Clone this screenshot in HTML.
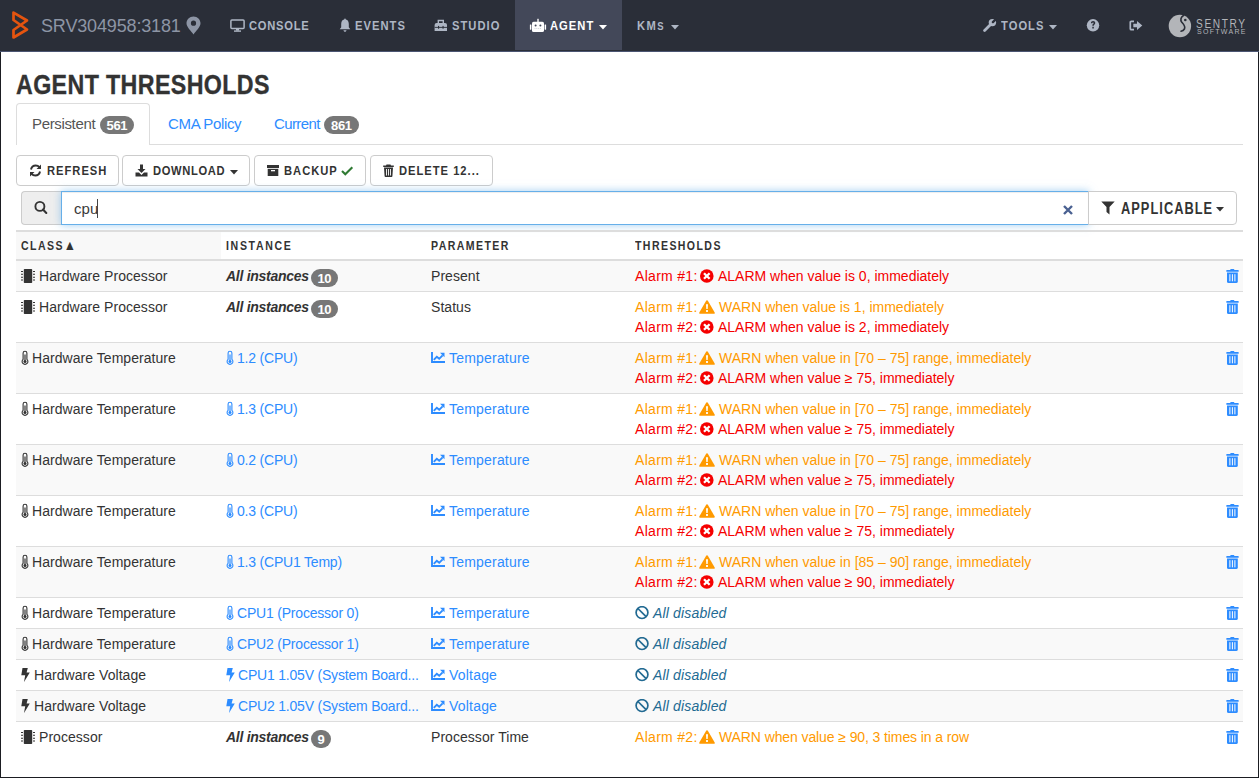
<!DOCTYPE html>
<html><head><meta charset="utf-8">
<style>
*{box-sizing:border-box;margin:0;padding:0}
html,body{width:1259px;height:778px;overflow:hidden;background:#fff}
body{position:relative;font-family:"Liberation Sans",sans-serif;color:#333;font-size:14px}
.a{position:absolute;white-space:nowrap;line-height:1}
svg{display:block;position:absolute}
#nav{position:absolute;left:0;top:0;width:1259px;height:52px;background:#2a2e38;border-bottom:1px solid #4b5572}
.ni{position:absolute;top:0;height:50px;color:#aeb6c4;font-weight:bold;font-size:13px;letter-spacing:0.6px}
.ni span{position:absolute;top:19px;line-height:14px;white-space:nowrap;transform-origin:0 0;transform:scaleX(0.86);letter-spacing:1.2px}
.ni span span{transform:none}
.frameL{position:absolute;left:0;top:52px;width:1px;height:726px;background:#1b1d22}
.frameR{position:absolute;left:1258px;top:52px;width:1px;height:726px;background:#1b1d22}
.frameB{position:absolute;left:0;top:777px;width:1259px;height:1px;background:#1b1d22}
.btn{position:absolute;top:155px;height:31px;border:1px solid #ccc;border-radius:4px;background:#fff;color:#333;font-weight:bold;font-size:13px;letter-spacing:1.1px}
.btn span{position:absolute;top:8px;line-height:14px;white-space:nowrap;transform-origin:0 0;transform:scaleX(0.86);letter-spacing:1.15px}
.badge{position:absolute;height:18px;border-radius:9px;background:#777;color:#fff;font-weight:bold;font-size:13px;line-height:20px;text-align:center;letter-spacing:-0.4px;text-indent:-0.4px}
.row{position:absolute;left:16px;width:1227px;border-top:1px solid #ddd}
.odd{background:#f6f6f6}
.t{position:absolute;line-height:16px;white-space:nowrap;font-size:14px}
.lnk{color:#2d8cff}
.red{color:#e8141c}
.org{color:#f5a020}
.gry{color:#333}
</style></head><body>
<div id="nav">
  <svg style="left:9px;top:9px" width="24" height="33" viewBox="0 0 24 33"><path d="M4.5,3.6 L18,11.5 L4.5,21 L4.5,28.5 L18,20.5 L4.5,11 Z" fill="none" stroke="#e4540f" stroke-width="2.7" stroke-linejoin="round"/></svg>
  <div class="a" style="left:41px;top:17px;font-size:18px;color:#8d95a5;letter-spacing:-0.15px">SRV304958:3181</div>
  <svg style="left:186px;top:16px" width="15" height="19" viewBox="0 0 15 19"><path d="M7.5,0.5 C11.5,0.5 14.5,3.5 14.5,7.3 C14.5,11 10,15 7.5,18.5 C5,15 0.5,11 0.5,7.3 C0.5,3.5 3.5,0.5 7.5,0.5 Z M7.5,4.6 A2.6,2.6 0 1,0 7.5,9.8 A2.6,2.6 0 1,0 7.5,4.6Z" fill="#8d95a5" fill-rule="evenodd"/></svg>

  <div class="ni" style="left:222px;width:100px">
    <svg style="left:8px;top:19px" width="15" height="13" viewBox="0 0 15 13"><rect x="0.9" y="0.9" width="13.2" height="8.7" rx="1" fill="none" stroke="#aeb6c4" stroke-width="1.5"/><rect x="6" y="10" width="3" height="1.6" fill="#aeb6c4"/><rect x="4" y="11.4" width="7" height="1.4" fill="#aeb6c4"/></svg>
    <span style="left:27px;letter-spacing:0.85px">CONSOLE</span>
  </div>
  <div class="ni" style="left:330px;width:90px">
    <svg style="left:9px;top:18px" width="12" height="14" viewBox="0 0 12 14"><path d="M6,0.6 C6.5,0.6 6.8,1 6.8,1.6 C8.9,2.1 9.8,3.9 9.8,6 L9.8,9.3 L11.3,11.2 L0.7,11.2 L2.2,9.3 L2.2,6 C2.2,3.9 3.1,2.1 5.2,1.6 C5.2,1 5.5,0.6 6,0.6Z M4.5,12.2 L7.5,12.2 C7.5,13.1 6.8,13.7 6,13.7 C5.2,13.7 4.5,13.1 4.5,12.2Z" fill="#aeb6c4"/></svg>
    <span style="left:25px">EVENTS</span>
  </div>
  <div class="ni" style="left:425px;width:90px">
    <svg style="left:9px;top:19px" width="14" height="13" viewBox="0 0 14 13"><path d="M3.6,0.8 H10 V4 H8.6 V2.2 H5 V4 H3.6Z" fill="#aeb6c4"/><path d="M0.6,6 Q0.6,4 2.6,4 H11 Q13,4 13,6 V12 H0.6Z" fill="#aeb6c4"/><rect x="0.6" y="7.9" width="12.4" height="0.9" fill="#2a2e38"/><rect x="4" y="6.9" width="1.1" height="2.8" fill="#2a2e38"/><rect x="8.5" y="6.9" width="1.1" height="2.8" fill="#2a2e38"/></svg>
    <span style="left:27px">STUDIO</span>
  </div>
  <div class="ni" style="left:515px;width:107px;height:50px;background:#434859;color:#fff">
    <svg style="left:14px;top:17px" width="19" height="16" viewBox="0 0 19 16"><rect x="8.3" y="1.8" width="1.4" height="3.2" fill="#fff"/><rect x="3" y="4.7" width="12" height="10.4" rx="1.6" fill="#fff"/><rect x="0.9" y="7.4" width="1.5" height="5.3" rx="0.4" fill="#fff"/><rect x="15.6" y="7.4" width="1.5" height="5.3" rx="0.4" fill="#fff"/><circle cx="6.6" cy="8.5" r="1" fill="#434859"/><circle cx="11.4" cy="8.5" r="1" fill="#434859"/><path d="M5.5,11.5 H12.5" stroke="#c8cad0" stroke-width="0.8" stroke-dasharray="1 0.8"/></svg>
    <span style="left:35px">AGENT</span>
    <svg style="left:84px;top:25px" width="8" height="5" viewBox="0 0 8 5"><path d="M0,0 L8,0 L4,4.5Z" fill="#fff"/></svg>
  </div>
  <div class="ni" style="left:622px;width:70px">
    <span style="left:15px;letter-spacing:1.6px">KM<span style="position:static;font-size:11px">S</span></span>
    <svg style="left:49px;top:25px" width="8" height="5" viewBox="0 0 8 5"><path d="M0,0 L8,0 L4,4.5Z" fill="#aeb6c4"/></svg>
  </div>

  <div class="ni" style="left:975px;width:90px">
    <svg style="left:8px;top:18px" width="14" height="14" viewBox="0 0 14 14"><path d="M1.6,12.4 L8.3,5.7" stroke="#aeb6c4" stroke-width="2.8" stroke-linecap="round"/><circle cx="9.4" cy="4.6" r="3.7" fill="#aeb6c4"/><path d="M9.9,4.1 L13.5,0.5" stroke="#2a2e38" stroke-width="2.3" stroke-linecap="round"/></svg>
    <span style="left:26px">TOOLS</span>
    <svg style="left:74px;top:25px" width="8" height="5" viewBox="0 0 8 5"><path d="M0,0 L8,0 L4,4.5Z" fill="#aeb6c4"/></svg>
  </div>
  <svg style="left:1086px;top:18px" width="14" height="14" viewBox="0 0 14 14"><circle cx="7" cy="7.3" r="6.2" fill="#aeb6c4"/><path d="M4.9,5.3 C4.9,3.9 5.9,3.1 7.1,3.1 C8.4,3.1 9.3,3.9 9.3,5 C9.3,6.4 7.8,6.5 7.8,7.8 L6.3,7.8 C6.3,5.9 7.7,5.9 7.7,5.1 C7.7,4.7 7.4,4.4 7,4.4 C6.6,4.4 6.3,4.8 6.3,5.3Z M6.3,8.8 L7.8,8.8 L7.8,10.4 L6.3,10.4Z" fill="#2a2e38"/></svg>
  <svg style="left:1129px;top:20px" width="14" height="11" viewBox="0 0 14 11"><path d="M5,1.3 H2.3 Q1.3,1.3 1.3,2.3 V8.7 Q1.3,9.7 2.3,9.7 H5" fill="none" stroke="#aeb6c4" stroke-width="1.7"/><path d="M4.3,3.7 H8 V0.9 L13.3,5.5 L8,10.1 V7.3 H4.3Z" fill="#aeb6c4"/></svg>
  <svg style="left:1168px;top:14px" width="24" height="24" viewBox="0 0 24 24"><circle cx="11.9" cy="12" r="11.2" fill="#b3b5b9"/><path d="M15.8,1.2 C12.8,3 12,6 13.8,8.3 C16,10.8 17.8,12.5 16.4,15 C15.6,16.4 14.2,17 13,17.2" fill="none" stroke="#2a2e38" stroke-width="1.6" stroke-linecap="round"/><circle cx="17.3" cy="6" r="1.3" fill="#2a2e38"/></svg>
  <div class="a" style="left:1196px;top:16.5px;font-size:13px;color:#b3b5b9;letter-spacing:2.1px;transform-origin:0 0;transform:scaleX(0.78)">SENTRY</div>
  <div class="a" style="left:1197px;top:28px;font-size:7px;color:#b3b5b9;letter-spacing:1.3px">SOFTWARE</div>
</div>
<div class="frameL"></div><div class="frameR"></div><div class="frameB"></div>

<div class="a" style="left:16px;top:72px;font-size:27px;font-weight:bold;color:#333;letter-spacing:0.45px;transform-origin:0 0;transform:scaleX(0.86);-webkit-text-stroke:0.35px #333">AGENT THRESHOLDS</div>

<!-- tabs -->
<div style="position:absolute;left:16px;top:144px;width:1227px;height:1px;background:#ddd"></div>
<div style="position:absolute;left:16px;top:103px;width:134px;height:42px;border:1px solid #ddd;border-bottom:none;border-radius:4px 4px 0 0;background:#fff"></div>
<div class="a" style="left:32px;top:116px;font-size:15px;color:#555;letter-spacing:-0.35px">Persistent</div>
<div class="badge" style="left:100px;top:116px;width:34px">561</div>
<div class="a lnk" style="left:168px;top:116px;font-size:15px;letter-spacing:-0.35px">CMA Policy</div>
<div class="a lnk" style="left:274px;top:116px;font-size:15px;letter-spacing:-0.6px">Current</div>
<div class="badge" style="left:324px;top:116px;width:35px">861</div>

<!-- buttons -->
<div class="btn" style="left:16px;width:103px">
  <svg style="left:12px;top:8px" width="13" height="13" viewBox="0 0 13 13"><path d="M2,5.5 C2.5,3 4.5,1.5 6.8,1.5 C8.3,1.5 9.5,2.1 10.4,3.1 M11,7.5 C10.5,10 8.5,11.5 6.2,11.5 C4.7,11.5 3.5,10.9 2.6,9.9" fill="none" stroke="#333" stroke-width="2"/><path d="M12,0.5 L12,5 L7.5,5Z M1,12.5 L1,8 L5.5,8Z" fill="#333"/></svg>
  <span style="left:30px">REFRESH</span>
</div>
<div class="btn" style="left:122px;width:128px">
  <svg style="left:12px;top:8px" width="13" height="13" viewBox="0 0 13 13"><path d="M5,0.5 L8,0.5 L8,5 L10.5,5 L6.5,9 L2.5,5 L5,5Z M0.5,8.5 L4,8.5 L6.5,11 L9,8.5 L12.5,8.5 L12.5,12.5 L0.5,12.5Z" fill="#333"/></svg>
  <span style="left:30px;letter-spacing:0.75px">DOWNLOAD</span>
  <svg style="left:107px;top:14px" width="8" height="5" viewBox="0 0 8 5"><path d="M0,0 L8,0 L4,4.5Z" fill="#333"/></svg>
</div>
<div class="btn" style="left:254px;width:112px">
  <svg style="left:12px;top:9px" width="12" height="11" viewBox="0 0 12 11"><rect x="0" y="0" width="12" height="3" fill="#333"/><path d="M0.7,3.8 L11.3,3.8 L11.3,11 L0.7,11Z" fill="#333"/><rect x="4" y="5" width="4" height="1.3" fill="#fff"/></svg>
  <span style="left:29px">BACKUP</span>
  <svg style="left:86px;top:10px" width="13" height="11" viewBox="0 0 13 11"><path d="M1,5 L4.3,8.3 L11.3,1.3" fill="none" stroke="#2f7a33" stroke-width="2.1"/></svg>
</div>
<div class="btn" style="left:370px;width:123px">
  <svg style="left:12px;top:8px" width="11" height="13" viewBox="0 0 11 13"><path d="M3.5,0.5 L7.5,0.5 L8,1.5 L10.8,1.5 L10.8,3 L0.2,3 L0.2,1.5 L3,1.5Z M1,3.6 L10,3.6 L9.4,12.3 C9.4,12.7 9,13 8.6,13 L2.4,13 C2,13 1.6,12.7 1.6,12.3Z" fill="#333"/><path d="M3.5,5 L3.5,11.5 M5.5,5 L5.5,11.5 M7.5,5 L7.5,11.5" stroke="#fff" stroke-width="0.9"/></svg>
  <span style="left:28px">DELETE 12...</span>
</div>

<!-- search -->
<div style="position:absolute;left:21px;top:191px;width:41px;height:34px;background:#eee;border:1px solid #ccc;border-right:none;border-radius:4px 0 0 4px"></div>
<svg style="left:33px;top:200px" width="15" height="15" viewBox="0 0 15 15"><circle cx="6.9" cy="6.4" r="4.5" fill="none" stroke="#333" stroke-width="1.9"/><path d="M10,9.6 L13.3,12.9" stroke="#333" stroke-width="2.1" stroke-linecap="round"/></svg>
<div style="position:absolute;left:61px;top:191px;width:1028px;height:34px;border:1px solid #66afe9;box-shadow:inset 0 1px 1px rgba(0,0,0,.075),0 0 8px rgba(102,175,233,.6);background:#fff"></div>
<div class="a" style="left:74px;top:201px;font-size:15px;color:#3a3a3a;letter-spacing:0.1px">cpu</div>
<div style="position:absolute;left:97px;top:199px;width:1px;height:19px;background:#444"></div>
<svg style="left:1063px;top:205px" width="10" height="10" viewBox="0 0 10 10"><path d="M1,1 L9,9 M9,1 L1,9" stroke="#4a6191" stroke-width="2.4"/></svg>
<div style="position:absolute;left:1088px;top:191px;width:149px;height:34px;border:1px solid #ccc;border-radius:0 4px 4px 0;background:#fff"></div>
<svg style="left:1101px;top:201px" width="14" height="14" viewBox="0 0 14 14"><path d="M0.3,0.5 L13.7,0.5 L8.5,6 L8.5,13.5 L5.5,11 L5.5,6Z" fill="#333"/></svg>
<div class="a" style="left:1121px;top:201px;font-size:16px;font-weight:bold;color:#333;letter-spacing:1.3px;transform-origin:0 0;transform:scaleX(0.8)">APPLICABLE</div>
<svg style="left:1216px;top:207px" width="8" height="5" viewBox="0 0 8 5"><path d="M0,0 L8,0 L4,4.5Z" fill="#333"/></svg>

<!-- table header -->
<div style="position:absolute;left:16px;top:230px;width:1227px;height:2px;background:#ddd"></div>
<div style="position:absolute;left:16px;top:232px;width:205px;height:27px;background:#f8f8f8"></div>
<div style="position:absolute;left:16px;top:259px;width:1227px;height:2px;background:#ddd"></div>
<div class="a" style="left:21px;top:240px;font-size:12px;font-weight:bold;color:#333;letter-spacing:1.6px;transform-origin:0 0;transform:scaleX(0.88)">CLASS<span style="font-size:14px;letter-spacing:0;line-height:0">▲</span></div>
<div class="a" style="left:226px;top:240px;font-size:12px;font-weight:bold;color:#333;letter-spacing:1.9px;transform-origin:0 0;transform:scaleX(0.88)">INSTANCE</div>
<div class="a" style="left:431px;top:240px;font-size:12px;font-weight:bold;color:#333;letter-spacing:1.6px;transform-origin:0 0;transform:scaleX(0.88)">PARAMETER</div>
<div class="a" style="left:635px;top:240px;font-size:12px;font-weight:bold;color:#333;letter-spacing:1.6px;transform-origin:0 0;transform:scaleX(0.88)">THRESHOLDS</div>

<div id="rows">
<div style="position:absolute;left:16px;top:261px;width:1227px;height:30px;background:#f9f9f9"></div>
<svg style="left:21px;top:269px" width="15" height="14" viewBox="0 0 15 14"><rect x="2.8" y="0" width="8.4" height="14" rx="0.8" fill="#333"/><path d="M0,2.5 H2 M0,5.3 H2 M0,8.2 H2 M0,11 H2 M12,2.5 H14 M12,5.3 H14 M12,8.2 H14 M12,11 H14" stroke="#333" stroke-width="1.1"/></svg>
<div class="t" style="left:39px;top:268px;color:#333;letter-spacing:0.05px">Hardware Processor</div>
<div class="t" style="left:226px;top:268px;color:#333;font-weight:bold;font-style:italic;letter-spacing:-0.28px">All instances</div>
<div class="badge" style="left:311px;top:269px;width:27px">10</div>
<div class="t" style="left:431px;top:268px;color:#333;letter-spacing:0.05px">Present</div>
<div class="t" style="left:635px;top:268px;color:#f50000;letter-spacing:0.3px">Alarm #1:</div>
<svg style="left:700px;top:269px" width="14" height="14" viewBox="0 0 14 14"><circle cx="6.8" cy="7" r="6.8" fill="#f50000"/><path d="M4,4.2 L9.6,9.8 M9.6,4.2 L4,9.8" stroke="#fff" stroke-width="2.3"/></svg>
<div class="t" style="left:718px;top:268px;color:#f50000;letter-spacing:0px">ALARM when value is 0, immediately</div>
<svg style="left:1226px;top:269px" width="13" height="14" viewBox="0 0 13 14"><rect x="4.3" y="0" width="4" height="1.6" rx="0.6" fill="#2d8cff"/><rect x="0.3" y="1.1" width="12.4" height="1.7" rx="0.5" fill="#2d8cff"/><path d="M1,3.4 H11.8 V12.4 Q11.8,14 10.2,14 H2.6 Q1,14 1,12.4Z" fill="#2d8cff"/><path d="M3.9,5.2 V12.3 M6.4,5.2 V12.3 M8.9,5.2 V12.3" stroke="#fff" stroke-width="1"/></svg>
<div style="position:absolute;left:16px;top:291px;width:1227px;height:1px;background:#ddd"></div>
<div style="position:absolute;left:16px;top:292px;width:1227px;height:50px;background:#fff"></div>
<svg style="left:21px;top:300px" width="15" height="14" viewBox="0 0 15 14"><rect x="2.8" y="0" width="8.4" height="14" rx="0.8" fill="#333"/><path d="M0,2.5 H2 M0,5.3 H2 M0,8.2 H2 M0,11 H2 M12,2.5 H14 M12,5.3 H14 M12,8.2 H14 M12,11 H14" stroke="#333" stroke-width="1.1"/></svg>
<div class="t" style="left:39px;top:299px;color:#333;letter-spacing:0.05px">Hardware Processor</div>
<div class="t" style="left:226px;top:299px;color:#333;font-weight:bold;font-style:italic;letter-spacing:-0.28px">All instances</div>
<div class="badge" style="left:311px;top:300px;width:27px">10</div>
<div class="t" style="left:431px;top:299px;color:#333;letter-spacing:0.05px">Status</div>
<div class="t" style="left:635px;top:299px;color:#ff9a00;letter-spacing:0.3px">Alarm #1:</div>
<svg style="left:699px;top:300px" width="16" height="14" viewBox="0 0 16 14"><path d="M8,0.3 C8.5,0.3 8.8,0.6 9,0.9 L15.7,12.5 C16,13.2 15.6,13.8 14.9,13.8 H1.1 C0.4,13.8 0,13.2 0.3,12.5 L7,0.9 C7.2,0.6 7.5,0.3 8,0.3Z" fill="#ff9a00"/><path d="M7,4.3 H9 L8.7,9 H7.3Z M7.1,10.1 H8.9 V11.9 H7.1Z" fill="#fff"/></svg>
<div class="t" style="left:719px;top:299px;color:#ff9a00;letter-spacing:0px">WARN when value is 1, immediately</div>
<div class="t" style="left:635px;top:319px;color:#f50000;letter-spacing:0.3px">Alarm #2:</div>
<svg style="left:700px;top:320px" width="14" height="14" viewBox="0 0 14 14"><circle cx="6.8" cy="7" r="6.8" fill="#f50000"/><path d="M4,4.2 L9.6,9.8 M9.6,4.2 L4,9.8" stroke="#fff" stroke-width="2.3"/></svg>
<div class="t" style="left:718px;top:319px;color:#f50000;letter-spacing:0px">ALARM when value is 2, immediately</div>
<svg style="left:1226px;top:300px" width="13" height="14" viewBox="0 0 13 14"><rect x="4.3" y="0" width="4" height="1.6" rx="0.6" fill="#2d8cff"/><rect x="0.3" y="1.1" width="12.4" height="1.7" rx="0.5" fill="#2d8cff"/><path d="M1,3.4 H11.8 V12.4 Q11.8,14 10.2,14 H2.6 Q1,14 1,12.4Z" fill="#2d8cff"/><path d="M3.9,5.2 V12.3 M6.4,5.2 V12.3 M8.9,5.2 V12.3" stroke="#fff" stroke-width="1"/></svg>
<div style="position:absolute;left:16px;top:342px;width:1227px;height:1px;background:#ddd"></div>
<div style="position:absolute;left:16px;top:343px;width:1227px;height:50px;background:#f9f9f9"></div>
<svg style="left:21px;top:350px" width="8" height="15" viewBox="0 0 8 15"><path d="M2.1,9.3 V3.1 A1.9,1.9 0 0,1 5.9,3.1 V9.3 A2.9,2.9 0 1,1 2.1,9.3Z" fill="none" stroke="#333" stroke-width="1.1"/><path d="M4,4.6 V11" stroke="#333" stroke-width="1.2"/><circle cx="4" cy="11.4" r="1.5" fill="#333"/></svg>
<div class="t" style="left:32px;top:350px;color:#333;letter-spacing:0.05px">Hardware Temperature</div>
<svg style="left:226px;top:350px" width="8" height="15" viewBox="0 0 8 15"><path d="M2.1,9.3 V3.1 A1.9,1.9 0 0,1 5.9,3.1 V9.3 A2.9,2.9 0 1,1 2.1,9.3Z" fill="none" stroke="#2d8cff" stroke-width="1.1"/><path d="M4,4.6 V11" stroke="#2d8cff" stroke-width="1.2"/><circle cx="4" cy="11.4" r="1.5" fill="#2d8cff"/></svg>
<div class="t" style="left:237px;top:350px;color:#2d8cff;letter-spacing:-0.2px">1.2 (CPU)</div>
<svg style="left:431px;top:352px" width="14" height="11" viewBox="0 0 14 11"><path d="M1,0 V10 H14" fill="none" stroke="#2d8cff" stroke-width="1.9"/><path d="M2.8,7.9 L5.8,4.7 L8.2,6.8 L11.6,3.3" fill="none" stroke="#2d8cff" stroke-width="1.9"/><path d="M9,0.7 H13.5 V5.2Z" fill="#2d8cff"/></svg>
<div class="t" style="left:449px;top:350px;color:#2d8cff;letter-spacing:0.2px">Temperature</div>
<div class="t" style="left:635px;top:350px;color:#ff9a00;letter-spacing:0.3px">Alarm #1:</div>
<svg style="left:699px;top:351px" width="16" height="14" viewBox="0 0 16 14"><path d="M8,0.3 C8.5,0.3 8.8,0.6 9,0.9 L15.7,12.5 C16,13.2 15.6,13.8 14.9,13.8 H1.1 C0.4,13.8 0,13.2 0.3,12.5 L7,0.9 C7.2,0.6 7.5,0.3 8,0.3Z" fill="#ff9a00"/><path d="M7,4.3 H9 L8.7,9 H7.3Z M7.1,10.1 H8.9 V11.9 H7.1Z" fill="#fff"/></svg>
<div class="t" style="left:719px;top:350px;color:#ff9a00;letter-spacing:0px">WARN when value in [70 – 75] range, immediately</div>
<div class="t" style="left:635px;top:370px;color:#f50000;letter-spacing:0.3px">Alarm #2:</div>
<svg style="left:700px;top:371px" width="14" height="14" viewBox="0 0 14 14"><circle cx="6.8" cy="7" r="6.8" fill="#f50000"/><path d="M4,4.2 L9.6,9.8 M9.6,4.2 L4,9.8" stroke="#fff" stroke-width="2.3"/></svg>
<div class="t" style="left:718px;top:370px;color:#f50000;letter-spacing:0px">ALARM when value ≥ 75, immediately</div>
<svg style="left:1226px;top:351px" width="13" height="14" viewBox="0 0 13 14"><rect x="4.3" y="0" width="4" height="1.6" rx="0.6" fill="#2d8cff"/><rect x="0.3" y="1.1" width="12.4" height="1.7" rx="0.5" fill="#2d8cff"/><path d="M1,3.4 H11.8 V12.4 Q11.8,14 10.2,14 H2.6 Q1,14 1,12.4Z" fill="#2d8cff"/><path d="M3.9,5.2 V12.3 M6.4,5.2 V12.3 M8.9,5.2 V12.3" stroke="#fff" stroke-width="1"/></svg>
<div style="position:absolute;left:16px;top:393px;width:1227px;height:1px;background:#ddd"></div>
<div style="position:absolute;left:16px;top:394px;width:1227px;height:50px;background:#fff"></div>
<svg style="left:21px;top:401px" width="8" height="15" viewBox="0 0 8 15"><path d="M2.1,9.3 V3.1 A1.9,1.9 0 0,1 5.9,3.1 V9.3 A2.9,2.9 0 1,1 2.1,9.3Z" fill="none" stroke="#333" stroke-width="1.1"/><path d="M4,4.6 V11" stroke="#333" stroke-width="1.2"/><circle cx="4" cy="11.4" r="1.5" fill="#333"/></svg>
<div class="t" style="left:32px;top:401px;color:#333;letter-spacing:0.05px">Hardware Temperature</div>
<svg style="left:226px;top:401px" width="8" height="15" viewBox="0 0 8 15"><path d="M2.1,9.3 V3.1 A1.9,1.9 0 0,1 5.9,3.1 V9.3 A2.9,2.9 0 1,1 2.1,9.3Z" fill="none" stroke="#2d8cff" stroke-width="1.1"/><path d="M4,4.6 V11" stroke="#2d8cff" stroke-width="1.2"/><circle cx="4" cy="11.4" r="1.5" fill="#2d8cff"/></svg>
<div class="t" style="left:237px;top:401px;color:#2d8cff;letter-spacing:-0.2px">1.3 (CPU)</div>
<svg style="left:431px;top:403px" width="14" height="11" viewBox="0 0 14 11"><path d="M1,0 V10 H14" fill="none" stroke="#2d8cff" stroke-width="1.9"/><path d="M2.8,7.9 L5.8,4.7 L8.2,6.8 L11.6,3.3" fill="none" stroke="#2d8cff" stroke-width="1.9"/><path d="M9,0.7 H13.5 V5.2Z" fill="#2d8cff"/></svg>
<div class="t" style="left:449px;top:401px;color:#2d8cff;letter-spacing:0.2px">Temperature</div>
<div class="t" style="left:635px;top:401px;color:#ff9a00;letter-spacing:0.3px">Alarm #1:</div>
<svg style="left:699px;top:402px" width="16" height="14" viewBox="0 0 16 14"><path d="M8,0.3 C8.5,0.3 8.8,0.6 9,0.9 L15.7,12.5 C16,13.2 15.6,13.8 14.9,13.8 H1.1 C0.4,13.8 0,13.2 0.3,12.5 L7,0.9 C7.2,0.6 7.5,0.3 8,0.3Z" fill="#ff9a00"/><path d="M7,4.3 H9 L8.7,9 H7.3Z M7.1,10.1 H8.9 V11.9 H7.1Z" fill="#fff"/></svg>
<div class="t" style="left:719px;top:401px;color:#ff9a00;letter-spacing:0px">WARN when value in [70 – 75] range, immediately</div>
<div class="t" style="left:635px;top:421px;color:#f50000;letter-spacing:0.3px">Alarm #2:</div>
<svg style="left:700px;top:422px" width="14" height="14" viewBox="0 0 14 14"><circle cx="6.8" cy="7" r="6.8" fill="#f50000"/><path d="M4,4.2 L9.6,9.8 M9.6,4.2 L4,9.8" stroke="#fff" stroke-width="2.3"/></svg>
<div class="t" style="left:718px;top:421px;color:#f50000;letter-spacing:0px">ALARM when value ≥ 75, immediately</div>
<svg style="left:1226px;top:402px" width="13" height="14" viewBox="0 0 13 14"><rect x="4.3" y="0" width="4" height="1.6" rx="0.6" fill="#2d8cff"/><rect x="0.3" y="1.1" width="12.4" height="1.7" rx="0.5" fill="#2d8cff"/><path d="M1,3.4 H11.8 V12.4 Q11.8,14 10.2,14 H2.6 Q1,14 1,12.4Z" fill="#2d8cff"/><path d="M3.9,5.2 V12.3 M6.4,5.2 V12.3 M8.9,5.2 V12.3" stroke="#fff" stroke-width="1"/></svg>
<div style="position:absolute;left:16px;top:444px;width:1227px;height:1px;background:#ddd"></div>
<div style="position:absolute;left:16px;top:445px;width:1227px;height:50px;background:#f9f9f9"></div>
<svg style="left:21px;top:452px" width="8" height="15" viewBox="0 0 8 15"><path d="M2.1,9.3 V3.1 A1.9,1.9 0 0,1 5.9,3.1 V9.3 A2.9,2.9 0 1,1 2.1,9.3Z" fill="none" stroke="#333" stroke-width="1.1"/><path d="M4,4.6 V11" stroke="#333" stroke-width="1.2"/><circle cx="4" cy="11.4" r="1.5" fill="#333"/></svg>
<div class="t" style="left:32px;top:452px;color:#333;letter-spacing:0.05px">Hardware Temperature</div>
<svg style="left:226px;top:452px" width="8" height="15" viewBox="0 0 8 15"><path d="M2.1,9.3 V3.1 A1.9,1.9 0 0,1 5.9,3.1 V9.3 A2.9,2.9 0 1,1 2.1,9.3Z" fill="none" stroke="#2d8cff" stroke-width="1.1"/><path d="M4,4.6 V11" stroke="#2d8cff" stroke-width="1.2"/><circle cx="4" cy="11.4" r="1.5" fill="#2d8cff"/></svg>
<div class="t" style="left:237px;top:452px;color:#2d8cff;letter-spacing:-0.2px">0.2 (CPU)</div>
<svg style="left:431px;top:454px" width="14" height="11" viewBox="0 0 14 11"><path d="M1,0 V10 H14" fill="none" stroke="#2d8cff" stroke-width="1.9"/><path d="M2.8,7.9 L5.8,4.7 L8.2,6.8 L11.6,3.3" fill="none" stroke="#2d8cff" stroke-width="1.9"/><path d="M9,0.7 H13.5 V5.2Z" fill="#2d8cff"/></svg>
<div class="t" style="left:449px;top:452px;color:#2d8cff;letter-spacing:0.2px">Temperature</div>
<div class="t" style="left:635px;top:452px;color:#ff9a00;letter-spacing:0.3px">Alarm #1:</div>
<svg style="left:699px;top:453px" width="16" height="14" viewBox="0 0 16 14"><path d="M8,0.3 C8.5,0.3 8.8,0.6 9,0.9 L15.7,12.5 C16,13.2 15.6,13.8 14.9,13.8 H1.1 C0.4,13.8 0,13.2 0.3,12.5 L7,0.9 C7.2,0.6 7.5,0.3 8,0.3Z" fill="#ff9a00"/><path d="M7,4.3 H9 L8.7,9 H7.3Z M7.1,10.1 H8.9 V11.9 H7.1Z" fill="#fff"/></svg>
<div class="t" style="left:719px;top:452px;color:#ff9a00;letter-spacing:0px">WARN when value in [70 – 75] range, immediately</div>
<div class="t" style="left:635px;top:472px;color:#f50000;letter-spacing:0.3px">Alarm #2:</div>
<svg style="left:700px;top:473px" width="14" height="14" viewBox="0 0 14 14"><circle cx="6.8" cy="7" r="6.8" fill="#f50000"/><path d="M4,4.2 L9.6,9.8 M9.6,4.2 L4,9.8" stroke="#fff" stroke-width="2.3"/></svg>
<div class="t" style="left:718px;top:472px;color:#f50000;letter-spacing:0px">ALARM when value ≥ 75, immediately</div>
<svg style="left:1226px;top:453px" width="13" height="14" viewBox="0 0 13 14"><rect x="4.3" y="0" width="4" height="1.6" rx="0.6" fill="#2d8cff"/><rect x="0.3" y="1.1" width="12.4" height="1.7" rx="0.5" fill="#2d8cff"/><path d="M1,3.4 H11.8 V12.4 Q11.8,14 10.2,14 H2.6 Q1,14 1,12.4Z" fill="#2d8cff"/><path d="M3.9,5.2 V12.3 M6.4,5.2 V12.3 M8.9,5.2 V12.3" stroke="#fff" stroke-width="1"/></svg>
<div style="position:absolute;left:16px;top:495px;width:1227px;height:1px;background:#ddd"></div>
<div style="position:absolute;left:16px;top:496px;width:1227px;height:50px;background:#fff"></div>
<svg style="left:21px;top:503px" width="8" height="15" viewBox="0 0 8 15"><path d="M2.1,9.3 V3.1 A1.9,1.9 0 0,1 5.9,3.1 V9.3 A2.9,2.9 0 1,1 2.1,9.3Z" fill="none" stroke="#333" stroke-width="1.1"/><path d="M4,4.6 V11" stroke="#333" stroke-width="1.2"/><circle cx="4" cy="11.4" r="1.5" fill="#333"/></svg>
<div class="t" style="left:32px;top:503px;color:#333;letter-spacing:0.05px">Hardware Temperature</div>
<svg style="left:226px;top:503px" width="8" height="15" viewBox="0 0 8 15"><path d="M2.1,9.3 V3.1 A1.9,1.9 0 0,1 5.9,3.1 V9.3 A2.9,2.9 0 1,1 2.1,9.3Z" fill="none" stroke="#2d8cff" stroke-width="1.1"/><path d="M4,4.6 V11" stroke="#2d8cff" stroke-width="1.2"/><circle cx="4" cy="11.4" r="1.5" fill="#2d8cff"/></svg>
<div class="t" style="left:237px;top:503px;color:#2d8cff;letter-spacing:-0.2px">0.3 (CPU)</div>
<svg style="left:431px;top:505px" width="14" height="11" viewBox="0 0 14 11"><path d="M1,0 V10 H14" fill="none" stroke="#2d8cff" stroke-width="1.9"/><path d="M2.8,7.9 L5.8,4.7 L8.2,6.8 L11.6,3.3" fill="none" stroke="#2d8cff" stroke-width="1.9"/><path d="M9,0.7 H13.5 V5.2Z" fill="#2d8cff"/></svg>
<div class="t" style="left:449px;top:503px;color:#2d8cff;letter-spacing:0.2px">Temperature</div>
<div class="t" style="left:635px;top:503px;color:#ff9a00;letter-spacing:0.3px">Alarm #1:</div>
<svg style="left:699px;top:504px" width="16" height="14" viewBox="0 0 16 14"><path d="M8,0.3 C8.5,0.3 8.8,0.6 9,0.9 L15.7,12.5 C16,13.2 15.6,13.8 14.9,13.8 H1.1 C0.4,13.8 0,13.2 0.3,12.5 L7,0.9 C7.2,0.6 7.5,0.3 8,0.3Z" fill="#ff9a00"/><path d="M7,4.3 H9 L8.7,9 H7.3Z M7.1,10.1 H8.9 V11.9 H7.1Z" fill="#fff"/></svg>
<div class="t" style="left:719px;top:503px;color:#ff9a00;letter-spacing:0px">WARN when value in [70 – 75] range, immediately</div>
<div class="t" style="left:635px;top:523px;color:#f50000;letter-spacing:0.3px">Alarm #2:</div>
<svg style="left:700px;top:524px" width="14" height="14" viewBox="0 0 14 14"><circle cx="6.8" cy="7" r="6.8" fill="#f50000"/><path d="M4,4.2 L9.6,9.8 M9.6,4.2 L4,9.8" stroke="#fff" stroke-width="2.3"/></svg>
<div class="t" style="left:718px;top:523px;color:#f50000;letter-spacing:0px">ALARM when value ≥ 75, immediately</div>
<svg style="left:1226px;top:504px" width="13" height="14" viewBox="0 0 13 14"><rect x="4.3" y="0" width="4" height="1.6" rx="0.6" fill="#2d8cff"/><rect x="0.3" y="1.1" width="12.4" height="1.7" rx="0.5" fill="#2d8cff"/><path d="M1,3.4 H11.8 V12.4 Q11.8,14 10.2,14 H2.6 Q1,14 1,12.4Z" fill="#2d8cff"/><path d="M3.9,5.2 V12.3 M6.4,5.2 V12.3 M8.9,5.2 V12.3" stroke="#fff" stroke-width="1"/></svg>
<div style="position:absolute;left:16px;top:546px;width:1227px;height:1px;background:#ddd"></div>
<div style="position:absolute;left:16px;top:547px;width:1227px;height:50px;background:#f9f9f9"></div>
<svg style="left:21px;top:554px" width="8" height="15" viewBox="0 0 8 15"><path d="M2.1,9.3 V3.1 A1.9,1.9 0 0,1 5.9,3.1 V9.3 A2.9,2.9 0 1,1 2.1,9.3Z" fill="none" stroke="#333" stroke-width="1.1"/><path d="M4,4.6 V11" stroke="#333" stroke-width="1.2"/><circle cx="4" cy="11.4" r="1.5" fill="#333"/></svg>
<div class="t" style="left:32px;top:554px;color:#333;letter-spacing:0.05px">Hardware Temperature</div>
<svg style="left:226px;top:554px" width="8" height="15" viewBox="0 0 8 15"><path d="M2.1,9.3 V3.1 A1.9,1.9 0 0,1 5.9,3.1 V9.3 A2.9,2.9 0 1,1 2.1,9.3Z" fill="none" stroke="#2d8cff" stroke-width="1.1"/><path d="M4,4.6 V11" stroke="#2d8cff" stroke-width="1.2"/><circle cx="4" cy="11.4" r="1.5" fill="#2d8cff"/></svg>
<div class="t" style="left:237px;top:554px;color:#2d8cff;letter-spacing:-0.2px">1.3 (CPU1 Temp)</div>
<svg style="left:431px;top:556px" width="14" height="11" viewBox="0 0 14 11"><path d="M1,0 V10 H14" fill="none" stroke="#2d8cff" stroke-width="1.9"/><path d="M2.8,7.9 L5.8,4.7 L8.2,6.8 L11.6,3.3" fill="none" stroke="#2d8cff" stroke-width="1.9"/><path d="M9,0.7 H13.5 V5.2Z" fill="#2d8cff"/></svg>
<div class="t" style="left:449px;top:554px;color:#2d8cff;letter-spacing:0.2px">Temperature</div>
<div class="t" style="left:635px;top:554px;color:#ff9a00;letter-spacing:0.3px">Alarm #1:</div>
<svg style="left:699px;top:555px" width="16" height="14" viewBox="0 0 16 14"><path d="M8,0.3 C8.5,0.3 8.8,0.6 9,0.9 L15.7,12.5 C16,13.2 15.6,13.8 14.9,13.8 H1.1 C0.4,13.8 0,13.2 0.3,12.5 L7,0.9 C7.2,0.6 7.5,0.3 8,0.3Z" fill="#ff9a00"/><path d="M7,4.3 H9 L8.7,9 H7.3Z M7.1,10.1 H8.9 V11.9 H7.1Z" fill="#fff"/></svg>
<div class="t" style="left:719px;top:554px;color:#ff9a00;letter-spacing:0px">WARN when value in [85 – 90] range, immediately</div>
<div class="t" style="left:635px;top:574px;color:#f50000;letter-spacing:0.3px">Alarm #2:</div>
<svg style="left:700px;top:575px" width="14" height="14" viewBox="0 0 14 14"><circle cx="6.8" cy="7" r="6.8" fill="#f50000"/><path d="M4,4.2 L9.6,9.8 M9.6,4.2 L4,9.8" stroke="#fff" stroke-width="2.3"/></svg>
<div class="t" style="left:718px;top:574px;color:#f50000;letter-spacing:0px">ALARM when value ≥ 90, immediately</div>
<svg style="left:1226px;top:555px" width="13" height="14" viewBox="0 0 13 14"><rect x="4.3" y="0" width="4" height="1.6" rx="0.6" fill="#2d8cff"/><rect x="0.3" y="1.1" width="12.4" height="1.7" rx="0.5" fill="#2d8cff"/><path d="M1,3.4 H11.8 V12.4 Q11.8,14 10.2,14 H2.6 Q1,14 1,12.4Z" fill="#2d8cff"/><path d="M3.9,5.2 V12.3 M6.4,5.2 V12.3 M8.9,5.2 V12.3" stroke="#fff" stroke-width="1"/></svg>
<div style="position:absolute;left:16px;top:597px;width:1227px;height:1px;background:#ddd"></div>
<div style="position:absolute;left:16px;top:598px;width:1227px;height:30px;background:#fff"></div>
<svg style="left:21px;top:605px" width="8" height="15" viewBox="0 0 8 15"><path d="M2.1,9.3 V3.1 A1.9,1.9 0 0,1 5.9,3.1 V9.3 A2.9,2.9 0 1,1 2.1,9.3Z" fill="none" stroke="#333" stroke-width="1.1"/><path d="M4,4.6 V11" stroke="#333" stroke-width="1.2"/><circle cx="4" cy="11.4" r="1.5" fill="#333"/></svg>
<div class="t" style="left:32px;top:605px;color:#333;letter-spacing:0.05px">Hardware Temperature</div>
<svg style="left:226px;top:605px" width="8" height="15" viewBox="0 0 8 15"><path d="M2.1,9.3 V3.1 A1.9,1.9 0 0,1 5.9,3.1 V9.3 A2.9,2.9 0 1,1 2.1,9.3Z" fill="none" stroke="#2d8cff" stroke-width="1.1"/><path d="M4,4.6 V11" stroke="#2d8cff" stroke-width="1.2"/><circle cx="4" cy="11.4" r="1.5" fill="#2d8cff"/></svg>
<div class="t" style="left:237px;top:605px;color:#2d8cff;letter-spacing:-0.2px">CPU1 (Processor 0)</div>
<svg style="left:431px;top:607px" width="14" height="11" viewBox="0 0 14 11"><path d="M1,0 V10 H14" fill="none" stroke="#2d8cff" stroke-width="1.9"/><path d="M2.8,7.9 L5.8,4.7 L8.2,6.8 L11.6,3.3" fill="none" stroke="#2d8cff" stroke-width="1.9"/><path d="M9,0.7 H13.5 V5.2Z" fill="#2d8cff"/></svg>
<div class="t" style="left:449px;top:605px;color:#2d8cff;letter-spacing:0.2px">Temperature</div>
<svg style="left:635px;top:606px" width="14" height="14" viewBox="0 0 14 14"><circle cx="7" cy="6.6" r="5.9" fill="none" stroke="#226a92" stroke-width="1.7"/><path d="M2.9,2.5 L11.1,10.7" stroke="#226a92" stroke-width="1.7"/></svg>
<div class="t" style="left:653px;top:605px;color:#226a92;font-style:italic;letter-spacing:0.16px">All disabled</div>
<svg style="left:1226px;top:606px" width="13" height="14" viewBox="0 0 13 14"><rect x="4.3" y="0" width="4" height="1.6" rx="0.6" fill="#2d8cff"/><rect x="0.3" y="1.1" width="12.4" height="1.7" rx="0.5" fill="#2d8cff"/><path d="M1,3.4 H11.8 V12.4 Q11.8,14 10.2,14 H2.6 Q1,14 1,12.4Z" fill="#2d8cff"/><path d="M3.9,5.2 V12.3 M6.4,5.2 V12.3 M8.9,5.2 V12.3" stroke="#fff" stroke-width="1"/></svg>
<div style="position:absolute;left:16px;top:628px;width:1227px;height:1px;background:#ddd"></div>
<div style="position:absolute;left:16px;top:629px;width:1227px;height:30px;background:#f9f9f9"></div>
<svg style="left:21px;top:636px" width="8" height="15" viewBox="0 0 8 15"><path d="M2.1,9.3 V3.1 A1.9,1.9 0 0,1 5.9,3.1 V9.3 A2.9,2.9 0 1,1 2.1,9.3Z" fill="none" stroke="#333" stroke-width="1.1"/><path d="M4,4.6 V11" stroke="#333" stroke-width="1.2"/><circle cx="4" cy="11.4" r="1.5" fill="#333"/></svg>
<div class="t" style="left:32px;top:636px;color:#333;letter-spacing:0.05px">Hardware Temperature</div>
<svg style="left:226px;top:636px" width="8" height="15" viewBox="0 0 8 15"><path d="M2.1,9.3 V3.1 A1.9,1.9 0 0,1 5.9,3.1 V9.3 A2.9,2.9 0 1,1 2.1,9.3Z" fill="none" stroke="#2d8cff" stroke-width="1.1"/><path d="M4,4.6 V11" stroke="#2d8cff" stroke-width="1.2"/><circle cx="4" cy="11.4" r="1.5" fill="#2d8cff"/></svg>
<div class="t" style="left:237px;top:636px;color:#2d8cff;letter-spacing:-0.2px">CPU2 (Processor 1)</div>
<svg style="left:431px;top:638px" width="14" height="11" viewBox="0 0 14 11"><path d="M1,0 V10 H14" fill="none" stroke="#2d8cff" stroke-width="1.9"/><path d="M2.8,7.9 L5.8,4.7 L8.2,6.8 L11.6,3.3" fill="none" stroke="#2d8cff" stroke-width="1.9"/><path d="M9,0.7 H13.5 V5.2Z" fill="#2d8cff"/></svg>
<div class="t" style="left:449px;top:636px;color:#2d8cff;letter-spacing:0.2px">Temperature</div>
<svg style="left:635px;top:637px" width="14" height="14" viewBox="0 0 14 14"><circle cx="7" cy="6.6" r="5.9" fill="none" stroke="#226a92" stroke-width="1.7"/><path d="M2.9,2.5 L11.1,10.7" stroke="#226a92" stroke-width="1.7"/></svg>
<div class="t" style="left:653px;top:636px;color:#226a92;font-style:italic;letter-spacing:0.16px">All disabled</div>
<svg style="left:1226px;top:637px" width="13" height="14" viewBox="0 0 13 14"><rect x="4.3" y="0" width="4" height="1.6" rx="0.6" fill="#2d8cff"/><rect x="0.3" y="1.1" width="12.4" height="1.7" rx="0.5" fill="#2d8cff"/><path d="M1,3.4 H11.8 V12.4 Q11.8,14 10.2,14 H2.6 Q1,14 1,12.4Z" fill="#2d8cff"/><path d="M3.9,5.2 V12.3 M6.4,5.2 V12.3 M8.9,5.2 V12.3" stroke="#fff" stroke-width="1"/></svg>
<div style="position:absolute;left:16px;top:659px;width:1227px;height:1px;background:#ddd"></div>
<div style="position:absolute;left:16px;top:660px;width:1227px;height:30px;background:#fff"></div>
<svg style="left:21px;top:668px" width="9" height="14" viewBox="0 0 9 14"><path d="M1.5,0 H6.8 L5.6,4.5 H8.8 L3,14 L4.2,7.3 H0.3Z" fill="#333"/></svg>
<div class="t" style="left:34px;top:667px;color:#333;letter-spacing:0.05px">Hardware Voltage</div>
<svg style="left:226px;top:668px" width="9" height="14" viewBox="0 0 9 14"><path d="M1.5,0 H6.8 L5.6,4.5 H8.8 L3,14 L4.2,7.3 H0.3Z" fill="#2d8cff"/></svg>
<div class="t" style="left:238px;top:667px;color:#2d8cff;letter-spacing:-0.2px">CPU1 1.05V (System Board...</div>
<svg style="left:431px;top:669px" width="14" height="11" viewBox="0 0 14 11"><path d="M1,0 V10 H14" fill="none" stroke="#2d8cff" stroke-width="1.9"/><path d="M2.8,7.9 L5.8,4.7 L8.2,6.8 L11.6,3.3" fill="none" stroke="#2d8cff" stroke-width="1.9"/><path d="M9,0.7 H13.5 V5.2Z" fill="#2d8cff"/></svg>
<div class="t" style="left:449px;top:667px;color:#2d8cff;letter-spacing:0.2px">Voltage</div>
<svg style="left:635px;top:668px" width="14" height="14" viewBox="0 0 14 14"><circle cx="7" cy="6.6" r="5.9" fill="none" stroke="#226a92" stroke-width="1.7"/><path d="M2.9,2.5 L11.1,10.7" stroke="#226a92" stroke-width="1.7"/></svg>
<div class="t" style="left:653px;top:667px;color:#226a92;font-style:italic;letter-spacing:0.16px">All disabled</div>
<svg style="left:1226px;top:668px" width="13" height="14" viewBox="0 0 13 14"><rect x="4.3" y="0" width="4" height="1.6" rx="0.6" fill="#2d8cff"/><rect x="0.3" y="1.1" width="12.4" height="1.7" rx="0.5" fill="#2d8cff"/><path d="M1,3.4 H11.8 V12.4 Q11.8,14 10.2,14 H2.6 Q1,14 1,12.4Z" fill="#2d8cff"/><path d="M3.9,5.2 V12.3 M6.4,5.2 V12.3 M8.9,5.2 V12.3" stroke="#fff" stroke-width="1"/></svg>
<div style="position:absolute;left:16px;top:690px;width:1227px;height:1px;background:#ddd"></div>
<div style="position:absolute;left:16px;top:691px;width:1227px;height:30px;background:#f9f9f9"></div>
<svg style="left:21px;top:699px" width="9" height="14" viewBox="0 0 9 14"><path d="M1.5,0 H6.8 L5.6,4.5 H8.8 L3,14 L4.2,7.3 H0.3Z" fill="#333"/></svg>
<div class="t" style="left:34px;top:698px;color:#333;letter-spacing:0.05px">Hardware Voltage</div>
<svg style="left:226px;top:699px" width="9" height="14" viewBox="0 0 9 14"><path d="M1.5,0 H6.8 L5.6,4.5 H8.8 L3,14 L4.2,7.3 H0.3Z" fill="#2d8cff"/></svg>
<div class="t" style="left:238px;top:698px;color:#2d8cff;letter-spacing:-0.2px">CPU2 1.05V (System Board...</div>
<svg style="left:431px;top:700px" width="14" height="11" viewBox="0 0 14 11"><path d="M1,0 V10 H14" fill="none" stroke="#2d8cff" stroke-width="1.9"/><path d="M2.8,7.9 L5.8,4.7 L8.2,6.8 L11.6,3.3" fill="none" stroke="#2d8cff" stroke-width="1.9"/><path d="M9,0.7 H13.5 V5.2Z" fill="#2d8cff"/></svg>
<div class="t" style="left:449px;top:698px;color:#2d8cff;letter-spacing:0.2px">Voltage</div>
<svg style="left:635px;top:699px" width="14" height="14" viewBox="0 0 14 14"><circle cx="7" cy="6.6" r="5.9" fill="none" stroke="#226a92" stroke-width="1.7"/><path d="M2.9,2.5 L11.1,10.7" stroke="#226a92" stroke-width="1.7"/></svg>
<div class="t" style="left:653px;top:698px;color:#226a92;font-style:italic;letter-spacing:0.16px">All disabled</div>
<svg style="left:1226px;top:699px" width="13" height="14" viewBox="0 0 13 14"><rect x="4.3" y="0" width="4" height="1.6" rx="0.6" fill="#2d8cff"/><rect x="0.3" y="1.1" width="12.4" height="1.7" rx="0.5" fill="#2d8cff"/><path d="M1,3.4 H11.8 V12.4 Q11.8,14 10.2,14 H2.6 Q1,14 1,12.4Z" fill="#2d8cff"/><path d="M3.9,5.2 V12.3 M6.4,5.2 V12.3 M8.9,5.2 V12.3" stroke="#fff" stroke-width="1"/></svg>
<div style="position:absolute;left:16px;top:721px;width:1227px;height:1px;background:#ddd"></div>
<div style="position:absolute;left:16px;top:722px;width:1227px;height:30px;background:#fff"></div>
<svg style="left:21px;top:730px" width="15" height="14" viewBox="0 0 15 14"><rect x="2.8" y="0" width="8.4" height="14" rx="0.8" fill="#333"/><path d="M0,2.5 H2 M0,5.3 H2 M0,8.2 H2 M0,11 H2 M12,2.5 H14 M12,5.3 H14 M12,8.2 H14 M12,11 H14" stroke="#333" stroke-width="1.1"/></svg>
<div class="t" style="left:39px;top:729px;color:#333;letter-spacing:0.05px">Processor</div>
<div class="t" style="left:226px;top:729px;color:#333;font-weight:bold;font-style:italic;letter-spacing:-0.28px">All instances</div>
<div class="badge" style="left:311px;top:730px;width:20px">9</div>
<div class="t" style="left:431px;top:729px;color:#333;letter-spacing:0.05px">Processor Time</div>
<div class="t" style="left:635px;top:729px;color:#ff9a00;letter-spacing:0.3px">Alarm #2:</div>
<svg style="left:699px;top:730px" width="16" height="14" viewBox="0 0 16 14"><path d="M8,0.3 C8.5,0.3 8.8,0.6 9,0.9 L15.7,12.5 C16,13.2 15.6,13.8 14.9,13.8 H1.1 C0.4,13.8 0,13.2 0.3,12.5 L7,0.9 C7.2,0.6 7.5,0.3 8,0.3Z" fill="#ff9a00"/><path d="M7,4.3 H9 L8.7,9 H7.3Z M7.1,10.1 H8.9 V11.9 H7.1Z" fill="#fff"/></svg>
<div class="t" style="left:719px;top:729px;color:#ff9a00;letter-spacing:-0.1px">WARN when value ≥ 90, 3 times in a row</div>
<svg style="left:1226px;top:730px" width="13" height="14" viewBox="0 0 13 14"><rect x="4.3" y="0" width="4" height="1.6" rx="0.6" fill="#2d8cff"/><rect x="0.3" y="1.1" width="12.4" height="1.7" rx="0.5" fill="#2d8cff"/><path d="M1,3.4 H11.8 V12.4 Q11.8,14 10.2,14 H2.6 Q1,14 1,12.4Z" fill="#2d8cff"/><path d="M3.9,5.2 V12.3 M6.4,5.2 V12.3 M8.9,5.2 V12.3" stroke="#fff" stroke-width="1"/></svg>
</div><!--/rows-->
</body></html>
